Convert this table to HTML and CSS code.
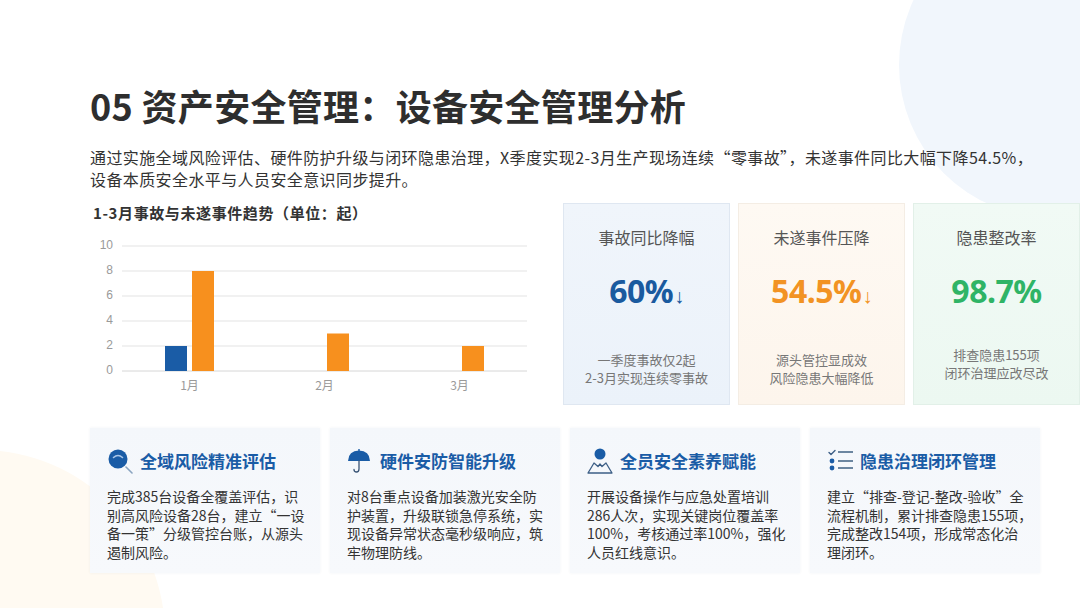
FILE: index.html
```html
<!DOCTYPE html>
<html lang="zh-CN">
<head>
<meta charset="utf-8">
<title>05 资产安全管理：设备安全管理分析</title>
<link rel="stylesheet" href="styles.css">
</head>
<body>
<div class="slide">
  <div class="deco deco-blue"></div>
  <div class="deco deco-cream"></div>
  <div class="content">
    <h1 class="title">05 资产安全管理：设备安全管理分析</h1>
    <p class="intro">通过实施全域风险评估、硬件防护升级与闭环隐患治理，X季度实现2-3月生产现场连续“零事故”，未遂事件同比大幅下降54.5%，<br>设备本质安全水平与人员安全意识同步提升。</p>

    <div class="mid">
      <div class="chart">
        <div class="chart-title">1-3月事故与未遂事件趋势（单位：起）</div>
        <svg class="chart-svg" width="450" height="170" viewBox="0 0 450 170">
          <g class="grid">
            <line x1="32" y1="13" x2="437" y2="13"/>
            <line x1="32" y1="38" x2="437" y2="38"/>
            <line x1="32" y1="63" x2="437" y2="63"/>
            <line x1="32" y1="88" x2="437" y2="88"/>
            <line x1="32" y1="113" x2="437" y2="113"/>
            <line x1="32" y1="138" x2="437" y2="138" class="base"/>
          </g>
          <g class="ylabels">
            <text x="23" y="13">10</text>
            <text x="23" y="38">8</text>
            <text x="23" y="63">6</text>
            <text x="23" y="88">4</text>
            <text x="23" y="113">2</text>
            <text x="23" y="138">0</text>
          </g>
          <rect class="bar-blue" x="75" y="113" width="22" height="25"/>
          <rect class="bar-orange" x="102" y="38" width="22" height="100"/>
          <rect class="bar-orange" x="237" y="100.5" width="22" height="37.5"/>
          <rect class="bar-orange" x="372" y="113" width="22" height="25"/>
          <g class="xlabels">
            <text x="99.5" y="154">1月</text>
            <text x="234.5" y="154">2月</text>
            <text x="369.5" y="154">3月</text>
          </g>
        </svg>
      </div>

      <div class="kpis">
        <div class="kpi kpi-blue">
          <div class="kpi-label">事故同比降幅</div>
          <div class="kpi-value">60%<span class="arrow">↓</span></div>
          <div class="kpi-note">一季度事故仅2起<br>2-3月实现连续零事故</div>
        </div>
        <div class="kpi kpi-orange">
          <div class="kpi-label">未遂事件压降</div>
          <div class="kpi-value">54.5%<span class="arrow">↓</span></div>
          <div class="kpi-note">源头管控显成效<br>风险隐患大幅降低</div>
        </div>
        <div class="kpi kpi-green">
          <div class="kpi-label">隐患整改率</div>
          <div class="kpi-value">98.7%</div>
          <div class="kpi-note">排查隐患155项<br>闭环治理应改尽改</div>
        </div>
      </div>
    </div>

    <div class="cards">
      <div class="card">
        <div class="card-head">
          <svg class="icon" width="26" height="26" viewBox="0 0 26 26">
            <circle cx="11" cy="11" r="9.5" fill="#1a5ca6"/>
            <path d="M6.5 9.5 Q11 5.5 15.5 9.5" stroke="#a9c6e8" stroke-width="1.6" fill="none" stroke-linecap="round"/>
            <line x1="19" y1="19" x2="25" y2="25" stroke="#8aa4c0" stroke-width="1.6" stroke-linecap="round"/>
          </svg>
          <span class="card-title">全域风险精准评估</span>
        </div>
        <p class="card-body">完成385台设备全覆盖评估，识<br>别高风险设备28台，建立“一设<br>备一策”分级管控台账，从源头<br>遏制风险。</p>
      </div>
      <div class="card">
        <div class="card-head">
          <svg class="icon" width="26" height="26" viewBox="0 0 26 26">
            <line x1="12" y1="1" x2="12" y2="3" stroke="#1a5ca6" stroke-width="1.4"/>
            <path d="M1 13 Q1.5 2.5 12 2.5 Q22.5 2.5 23 13 Z" fill="#1a5ca6"/>
            <path d="M12 13 V21 Q12 24 9.5 24 Q7 24 7 21.5" stroke="#3a5576" stroke-width="1.3" fill="none" stroke-linecap="round"/>
          </svg>
          <span class="card-title">硬件安防智能升级</span>
        </div>
        <p class="card-body">对8台重点设备加装激光安全防<br>护装置，升级联锁急停系统，实<br>现设备异常状态毫秒级响应，筑<br>牢物理防线。</p>
      </div>
      <div class="card">
        <div class="card-head">
          <svg class="icon" width="26" height="26" viewBox="0 0 26 26">
            <circle cx="13" cy="6" r="5.5" fill="#1a5ca6"/>
            <path d="M1 25 L7 15 L11 18.5 L13 16 L15 18.5 L19 15 L25 25 Z" stroke="#3d5f86" stroke-width="1.3" fill="none" stroke-linejoin="round"/>
          </svg>
          <span class="card-title">全员安全素养赋能</span>
        </div>
        <p class="card-body">开展设备操作与应急处置培训<br>286人次，实现关键岗位覆盖率<br>100%，考核通过率100%，强化<br>人员红线意识。</p>
      </div>
      <div class="card">
        <div class="card-head">
          <svg class="icon" width="26" height="26" viewBox="0 0 26 26">
            <path d="M2 4.5 L4 6.5 L8 2.5" stroke="#3d5f86" stroke-width="1.4" fill="none" stroke-linecap="round" stroke-linejoin="round"/>
            <circle cx="5" cy="13" r="2.4" fill="#1a5ca6"/>
            <circle cx="5" cy="20" r="2.4" fill="#1a5ca6"/>
            <line x1="11" y1="4" x2="26" y2="4" stroke="#4a6a8a" stroke-width="1.6"/>
            <line x1="11" y1="13" x2="26" y2="13" stroke="#4a6a8a" stroke-width="1.6"/>
            <line x1="11" y1="20" x2="26" y2="20" stroke="#4a6a8a" stroke-width="1.6"/>
          </svg>
          <span class="card-title">隐患治理闭环管理</span>
        </div>
        <p class="card-body">建立“排查-登记-整改-验收”全<br>流程机制，累计排查隐患155项，<br>完成整改154项，形成常态化治<br>理闭环。</p>
      </div>
    </div>
  </div>
</div>
</body>
</html>
```

FILE: styles.css
```css
* { box-sizing: border-box; }
html, body { margin: 0; padding: 0; background: #ffffff; }
body {
  font-family: "Noto Sans CJK SC", "Noto Sans", "Liberation Sans", sans-serif;
  color: #333333;
}
.slide {
  position: relative;
  width: 1080px;
  height: 608px;
  overflow: hidden;
  background: #ffffff;
}
.deco {
  position: absolute;
  border-radius: 50%;
  z-index: 0;
}
.deco-blue {
  left: 899px;
  top: -88px;
  width: 306px;
  height: 306px;
  background: #f1f6fc;
}
.deco-cream {
  left: -205px;
  top: 450px;
  width: 370px;
  height: 370px;
  background: #fffaf2;
}
.content {
  position: relative;
  z-index: 1;
  padding: 84px 0 0 90px;
}
.title {
  margin: 0;
  font-size: 36px;
  line-height: 43px;
  font-weight: 700;
  color: #2e2e2e;
  letter-spacing: 0.3px;
}
.intro {
  margin: 19px 0 0 0;
  font-size: 16px;
  line-height: 22px;
  color: #333333;
  white-space: nowrap;
  letter-spacing: 0.4px;
}
.mid {
  display: flex;
  margin-top: 13px;
}
.chart {
  width: 450px;
  margin-right: 23px;
}
.chart-title {
  padding-left: 3px;
  font-size: 15px;
  line-height: 20px;
  font-weight: 700;
  color: #333333;
  letter-spacing: 0.6px;
}
.chart-svg {
  display: block;
  margin-top: 10px;
}
.grid line { stroke: #e3e3e3; stroke-width: 1; }
.grid line.base { stroke: #d6d6d6; }
.ylabels text {
  font-family: "Liberation Sans", "Noto Sans CJK SC", sans-serif;
  font-size: 12px;
  fill: #9a9a9a;
  text-anchor: end;
  dominant-baseline: middle;
}
.xlabels text {
  font-family: "Noto Sans CJK SC", sans-serif;
  font-size: 12px;
  fill: #9a9a9a;
  text-anchor: middle;
  dominant-baseline: middle;
}
.bar-blue { fill: #1a5ca6; }
.bar-orange { fill: #f7901e; }

.kpis {
  display: flex;
  gap: 8px;
}
.kpi {
  width: 167px;
  height: 202px;
  border: 1px solid #e3eaf2;
  display: flex;
  flex-direction: column;
  align-items: center;
  padding-top: 22px;
  text-align: center;
}
.kpi-blue { background: linear-gradient(180deg, #f0f5fb, #ebf2fa); border-color: #dfe7f1; }
.kpi-orange { background: linear-gradient(180deg, #fef9f3, #fdf5ec); border-color: #f4ede4; }
.kpi-green { background: linear-gradient(180deg, #f1faf5, #ecf8f1); border-color: #e2f0e8; }
.kpi-label {
  font-size: 16px;
  line-height: 22px;
  color: #555555;
}
.kpi-value {
  margin-top: 23px;
  font-family: "Noto Sans", "Open Sans", sans-serif;
  font-size: 32px;
  line-height: 40px;
  font-weight: 700;
  letter-spacing: -0.5px;
}
.kpi-value .arrow {
  font-size: 20px;
  font-weight: 400;
  margin-left: 1px;
}
.kpi-blue .kpi-value { color: #1a5a9f; }
.kpi-orange .kpi-value { color: #f29323; }
.kpi-green .kpi-value { color: #2fb466; }
.kpi-note {
  margin-top: 35px;
  font-size: 13px;
  line-height: 18px;
  color: #777777;
}

.cards {
  display: flex;
  gap: 10px;
  margin-top: 23px;
}
.card {
  width: 230px;
  height: 145px;
  background: linear-gradient(180deg, #f4f7fb, #f7f9fc);
  box-shadow: 0 0 3px rgba(40, 70, 110, 0.06);
  padding: 20px 0 0 17px;
}
.card-head {
  display: flex;
  align-items: center;
  height: 26px;
}
.icon {
  flex: none;
  margin-right: 7px;
}
.card-title {
  font-size: 17px;
  line-height: 24px;
  font-weight: 700;
  color: #1a5ca6;
}
.card-body {
  margin: 13px 0 0 0;
  font-size: 14px;
  line-height: 18.7px;
  color: #333333;
  white-space: nowrap;
}
```
